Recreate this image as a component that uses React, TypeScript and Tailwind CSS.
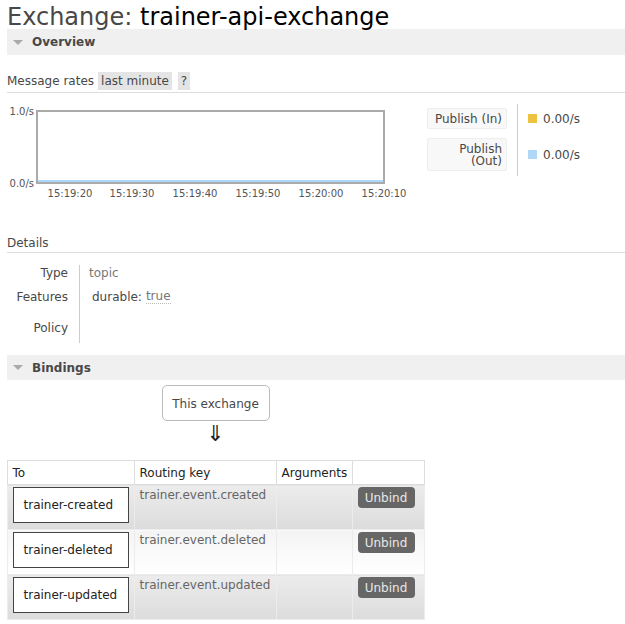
export default function App() {
  const rows = [
    { q: "trainer-created", k: "trainer.event.created", alt: 1 },
    { q: "trainer-deleted", k: "trainer.event.deleted", alt: 2 },
    { q: "trainer-updated", k: "trainer.event.updated", alt: 1 },
  ];
  return (
    <div className="w-[625px] h-[624px] overflow-hidden bg-white pl-[7px] font-['DejaVu_Sans',sans-serif] text-[12px] leading-[14px] text-[#484848]">
      <h1 className="h-[29px] pt-[6px] text-[24px] leading-[22px] whitespace-nowrap font-normal">
        <span className="text-[#484848]">Exchange: </span>
        <span className="text-black">trainer-api-exchange</span>
      </h1>

      <div className="flex h-[26px] items-center bg-[#f0f0f0] pl-[6px]">
        <svg width="10" height="5" viewBox="0 0 10 5">
          <path d="M0 0H10L5 5Z" fill="#aaa" />
        </svg>
        <span className="ml-[9px] font-bold">Overview</span>
      </div>

      <div className="mt-[17px] border-b border-[#ddd] pb-[2px]">
        <div className="flex h-[18px] items-center">
          <span>Message rates</span>
          <span className="ml-[4px] h-[18px] bg-[#e4e4e4] px-[3px] leading-[18px]">last minute</span>
          <span className="ml-[6px] h-[18px] bg-[#e4e4e4] px-[3px] leading-[18px]">?</span>
        </div>
      </div>

      <div className="mt-[11px] flex h-[100px]">
        <div className="relative h-[100px] w-[413px] shrink-0 text-[10px] leading-[12px] text-[#545454]">
          <div className="absolute left-0 top-[2px] w-[27px] text-right">1.0/s</div>
          <div className="absolute left-0 top-[74px] w-[27px] text-right">0.0/s</div>
          <div className="absolute left-[29px] top-[6px] h-[74px] w-[349px] border-2 border-[#aaa]">
            <div className="absolute bottom-0 left-0 right-0 h-[2px] bg-[#afd8f8]" />
          </div>
          <div className="absolute left-[33px] top-[84px] w-[60px] text-center">15:19:20</div>
          <div className="absolute left-[95px] top-[84px] w-[60px] text-center">15:19:30</div>
          <div className="absolute left-[158px] top-[84px] w-[60px] text-center">15:19:40</div>
          <div className="absolute left-[221px] top-[84px] w-[60px] text-center">15:19:50</div>
          <div className="absolute left-[284px] top-[84px] w-[60px] text-center">15:20:00</div>
          <div className="absolute left-[347px] top-[84px] w-[60px] text-center">15:20:10</div>
        </div>
        <div className="ml-[7px] flex h-[72px]">
          <div className="flex flex-col gap-[9px] pr-[10px] pt-[4px]">
            <div className="flex h-[21px] w-[80px] items-center justify-end rounded-[2px] border border-[#eee] bg-[#f8f8f8] pr-[4px] text-right leading-[12px]">
              Publish (In)
            </div>
            <div className="flex h-[33px] w-[80px] flex-col items-end justify-center rounded-[2px] border border-[#eee] bg-[#f8f8f8] pr-[4px] text-right leading-[12px]">
              <span>Publish</span>
              <span>(Out)</span>
            </div>
          </div>
          <div className="flex flex-col gap-[9px] border-l border-[#ccc] pl-[10px] pt-[4px]">
            <div className="flex h-[21px] items-center">
              <span className="h-[9px] w-[9px] bg-[#edc240]" />
              <span className="ml-[6px]">0.00/s</span>
            </div>
            <div className="flex h-[33px] items-center">
              <span className="h-[9px] w-[9px] bg-[#afd8f8]" />
              <span className="ml-[6px]">0.00/s</span>
            </div>
          </div>
        </div>
      </div>

      <div className="mt-[32px] border-b border-[#ddd] pb-[2px]">Details</div>

      <div className="mt-[12px] grid w-fit grid-cols-[72px_200px]">
        <div className="flex h-[16px] items-center justify-end pr-[11px]">Type</div>
        <div className="flex h-[16px] items-center border-l border-[#ccc] pl-[9px] text-[#777]">topic</div>
        <div className="flex h-[31px] items-center justify-end pr-[11px]">Features</div>
        <div className="flex h-[31px] items-center border-l border-[#ccc] pl-[12px]">
          <span>durable:</span>
          <span className="ml-[4px] border-b border-dotted border-[#bbb] text-[#777]">true</span>
        </div>
        <div className="flex h-[31px] items-center justify-end pr-[11px]">Policy</div>
        <div className="flex h-[31px] items-center border-l border-[#ccc] pl-[9px]" />
      </div>

      <div className="mt-[12px] flex h-[25px] items-center bg-[#f0f0f0] pl-[6px]">
        <svg width="10" height="5" viewBox="0 0 10 5">
          <path d="M0 0H10L5 5Z" fill="#aaa" />
        </svg>
        <span className="ml-[9px] font-bold">Bindings</span>
      </div>

      <div className="flex w-[417px] flex-col items-center">
        <div className="mt-[5px] flex h-[36px] w-[108px] items-center justify-center rounded-[5px] border border-[#bbb] pt-[1px]">
          This exchange
        </div>
        <div className="h-[26px] text-[22px] leading-[26px] text-[#222]">⇓</div>
        <table className="mt-[13px] w-[417px] table-fixed border-collapse border border-[#ccc]">
          <colgroup>
            <col className="w-[127px]" />
            <col className="w-[142px]" />
            <col className="w-[76px]" />
            <col className="w-[72px]" />
          </colgroup>
          <thead>
            <tr className="h-[24px]">
              <th className="border border-[#ddd] bg-white px-[5px] pt-[1px] text-left font-normal text-[#222]">To</th>
              <th className="border border-[#ddd] bg-white px-[5px] pt-[1px] text-left font-normal text-[#222]">Routing key</th>
              <th className="border border-[#ddd] bg-white px-[5px] pt-[1px] text-left font-normal text-[#222]">Arguments</th>
              <th className="border border-[#ddd] bg-white px-[5px] pt-[1px] text-left font-normal text-[#222]"></th>
            </tr>
          </thead>
          <tbody>
            {rows.map((r) => {
              const bg =
                r.alt === 1
                  ? "bg-linear-to-b from-[#ececec] to-[#dcdcdc]"
                  : "bg-linear-to-b from-[#f4f4f4] to-white";
              return (
                <tr key={r.q} className="h-[45px]">
                  <td className={`border border-[#ececec] px-[5px] pt-[2px] align-top ${bg}`}>
                    <div className="flex h-[36px] w-[116px] items-center justify-start border border-[#444] bg-white pl-[10px] text-[#222]">
                      {r.q}
                    </div>
                  </td>
                  <td className={`border border-[#ececec] px-[5px] pt-[3px] align-top text-[#666] ${bg}`}>{r.k}</td>
                  <td className={`border border-[#ececec] px-[5px] pt-[2px] align-top ${bg}`}></td>
                  <td className={`border border-[#ececec] px-[5px] pt-[2px] align-top ${bg}`}>
                    <div className="flex h-[21px] w-[57px] items-center justify-center rounded-[4px] bg-[#666] text-[#e8e8e8]">
                      Unbind
                    </div>
                  </td>
                </tr>
              );
            })}
          </tbody>
        </table>
      </div>
    </div>
  );
}
